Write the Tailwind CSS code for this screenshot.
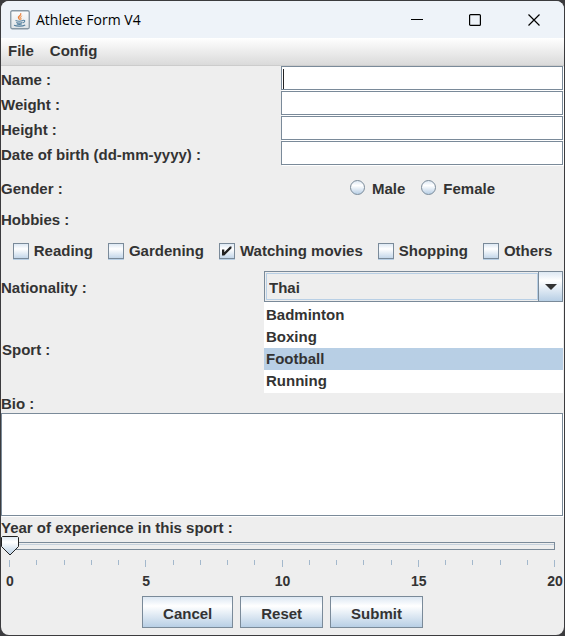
<!DOCTYPE html>
<html lang="en">
<head>
<meta charset="utf-8">
<title>Athlete Form V4</title>
<script src="https://cdn.jsdelivr.net/npm/@tailwindcss/browser@4"></script>
</head>
<body class="flex min-h-screen flex-col bg-[#3b3b3e] p-px font-['Liberation_Sans',Arial,sans-serif] text-[15px] leading-[18px] font-bold text-[#333333]">
<div class="flex flex-1 flex-col overflow-hidden rounded-lg bg-[#eeeeee]">
  <header class="flex h-[37px] items-center bg-[#eef3f9] pl-[9px] text-black">
    <svg class="mr-1.5 size-5" viewBox="0 0 20 20" fill="none" aria-hidden="true">
      <defs><linearGradient id="tile" x1="0" y1="0" x2="0" y2="1"><stop stop-color="#fdfdfd"/><stop offset="1" stop-color="#dde2e6"/></linearGradient></defs>
      <rect x=".75" y=".75" width="18.500" height="18" rx="1.500" fill="url(#tile)" stroke="#8797a3" stroke-width="1.300"/>
      <path d="M10.800 3c.5 2-3.400 2.800-2.600 5 .3.900 1 1.300 1.200 2 .6-1.200-.6-1.700-.2-2.700C9.700 6 11.700 5 10.800 3z" fill="#e8762c" stroke="#e8762c" stroke-width=".5"/>
      <path d="M12.200 5.700c-1.800.7-2.500 1.500-1.800 2.600.4.700.3 1.200-.2 1.800 1.300-.7 1.500-1.300.8-2.200-.5-.8.200-1.300 1.200-2.200z" fill="#f0924c" stroke="#f0924c" stroke-width=".4"/>
      <path d="M5.500 10.600c2 .7 5.500.7 7.500 0M6.300 12.500c1.900.7 4.200.7 6 0M6.800 14c1.500.5 3.500.5 5 0M13 10.300c2.500-.3 2.200 2-.3 2.800M4 15.300c2.800 1.200 8.500 1.200 11.200-.3" stroke="#54809f" stroke-width="1.100"/>
    </svg>
    <h1 class="flex-1 font-['Open_Sans',sans-serif] text-[14px] font-normal">Athlete Form V4</h1>
    <button type="button" aria-label="Minimize" class="flex h-full w-[58px] items-center justify-center"><svg width="12" height="12" viewBox="0 0 12 12" aria-hidden="true"><path d="M0 5.500h12" stroke="#000"/></svg></button>
    <button type="button" aria-label="Maximize" class="flex h-full w-[58px] items-center justify-center"><svg width="12" height="12" viewBox="0 0 12 12" fill="none" aria-hidden="true"><rect x=".6" y=".6" width="10.800" height="10.800" rx="1" stroke="#000" stroke-width="1.200"/></svg></button>
    <button type="button" aria-label="Close" class="flex h-full w-[60px] items-center justify-center"><svg width="12" height="12" viewBox="0 0 12 12" aria-hidden="true"><path d="M.5.5l11 11M11.500.5l-11 11" stroke="#000" stroke-width="1.200"/></svg></button>
  </header>

  <nav class="flex h-7 items-center gap-4 border-b border-[#cccccc] bg-linear-to-b from-white to-[#dadada] px-[7px] pb-0.5">
    <button type="button">File</button>
    <button type="button">Config</button>
  </nav>

  <form class="flex flex-col">
    <div class="grid grid-cols-[280fr_283fr] items-center gap-y-px">
      <label for="name" class="pt-1">Name :</label>
      <div class="relative mr-px h-6">
        <input id="name" type="text" class="peer block h-full w-full border border-[#7a8a99] bg-white px-px shadow-[1px_1px_0_#ffffff] outline-none">
        <span class="pointer-events-none absolute bottom-px left-0.5 top-[3px] w-px bg-[#222222] peer-focus:hidden"></span>
      </div>
      <label for="weight" class="pt-1">Weight :</label>
      <input id="weight" type="text" class="mr-px h-6 min-w-0 border border-[#7a8a99] bg-white px-px shadow-[1px_1px_0_#ffffff] outline-none">
      <label for="height" class="pt-1">Height :</label>
      <input id="height" type="text" class="mr-px h-6 min-w-0 border border-[#7a8a99] bg-white px-px shadow-[1px_1px_0_#ffffff] outline-none">
      <label for="birth" class="pt-1">Date of birth (dd-mm-yyyy) :</label>
      <input id="birth" type="text" class="mr-px h-6 min-w-0 border border-[#7a8a99] bg-white px-px shadow-[1px_1px_0_#ffffff] outline-none">
    </div>

    <div role="radiogroup" aria-labelledby="gender" class="grid h-[46px] grid-cols-[280fr_283fr] items-center pt-0.5">
      <span id="gender">Gender :</span>
      <div class="flex justify-center gap-4">
        <label class="flex items-center gap-[7px]"><input type="radio" name="gender" class="-mt-1 size-[15px] appearance-none rounded-full border border-[#7a8a99] bg-linear-to-b from-[#dde8f3] via-white via-35% to-[#b8cfe5]">Male</label>
        <label class="flex items-center gap-[7px]"><input type="radio" name="gender" class="-mt-1 size-[15px] appearance-none rounded-full border border-[#7a8a99] bg-linear-to-b from-[#dde8f3] via-white via-35% to-[#b8cfe5]">Female</label>
      </div>
    </div>

    <fieldset>
      <legend class="flex h-5 items-center pb-0.5">Hobbies :</legend>
      <div class="flex h-10 items-center justify-center gap-[15px]">
        <label class="flex items-center gap-[5px]"><input type="checkbox" class="size-4 appearance-none border border-[#7a8a99] bg-linear-to-b from-[#dde8f3] via-white via-35% to-[#c4d7ea] shadow-[0_1px_0_#b8cfe5]">Reading</label>
        <label class="flex items-center gap-[5px]"><input type="checkbox" class="size-4 appearance-none border border-[#7a8a99] bg-linear-to-b from-[#dde8f3] via-white via-35% to-[#c4d7ea] shadow-[0_1px_0_#b8cfe5]">Gardening</label>
        <label class="relative flex items-center gap-[5px]"><input type="checkbox" checked class="peer size-4 appearance-none border border-[#7a8a99] bg-linear-to-b from-[#dde8f3] via-white via-35% to-[#c4d7ea] shadow-[0_1px_0_#b8cfe5]"><svg class="pointer-events-none absolute left-0 hidden size-4 peer-checked:block" viewBox="0 0 16 16" aria-hidden="true"><path d="M3 6.500h2.300v2.700L11 3.500h1.500v1.800L5.300 12.500H3z" fill="#222"/></svg>Watching movies</label>
        <label class="flex items-center gap-[5px]"><input type="checkbox" class="size-4 appearance-none border border-[#7a8a99] bg-linear-to-b from-[#dde8f3] via-white via-35% to-[#c4d7ea] shadow-[0_1px_0_#b8cfe5]">Shopping</label>
        <label class="flex items-center gap-[5px]"><input type="checkbox" class="size-4 appearance-none border border-[#7a8a99] bg-linear-to-b from-[#dde8f3] via-white via-35% to-[#c4d7ea] shadow-[0_1px_0_#b8cfe5]">Others</label>
      </div>
    </fieldset>

    <div class="flex items-center pr-px">
      <label for="nationality" class="w-[263px] pt-0.5">Nationality :</label>
      <div class="relative flex-1">
        <select id="nationality" class="block h-[31px] w-full appearance-none border border-[#7a8a99] bg-[#eeeeee] pl-1 pt-0.5 outline-none"><option>Thai</option></select>
        <span class="pointer-events-none absolute inset-y-0.5 left-0.5 right-[25px] border border-[#b8cfe5]"></span>
        <span class="pointer-events-none absolute inset-y-px right-px flex w-6 items-center justify-center border-l border-[#7a8a99] bg-linear-to-b from-[#dde8f3] via-white via-30% to-[#b8cfe5]"><svg width="12" height="6" viewBox="0 0 12 6" aria-hidden="true"><path d="M0 0h12L6 6z" fill="#333"/></svg></span>
      </div>
    </div>

    <div class="flex items-center pr-px">
      <label for="sport" class="w-[263px] pl-px pt-1">Sport :</label>
      <select id="sport" size="4" class="block h-[91px] flex-1 appearance-none overflow-hidden bg-white pt-0.5 pb-px outline-none">
        <option class="h-[22px] min-h-0 px-0.5 py-0.5 font-bold text-[#333333]">Badminton</option>
        <option class="h-[22px] min-h-0 px-0.5 py-0.5 font-bold text-[#333333]">Boxing</option>
        <option selected class="h-[22px] min-h-0 bg-linear-to-b from-[#b8cfe5] to-[#b8cfe5] px-0.5 py-0.5 font-bold text-[#333333]">Football</option>
        <option class="h-[22px] min-h-0 px-0.5 py-0.5 font-bold text-[#333333]">Running</option>
      </select>
    </div>

    <label for="bio" class="pt-0.5">Bio :</label>
    <textarea id="bio" class="mr-px block h-[103px] resize-none border border-[#7a8a99] bg-white p-px shadow-[1px_1px_0_#ffffff] outline-none"></textarea>

    <label for="years" class="flex h-5 items-center pt-1">Year of experience in this sport :</label>
    <div class="relative h-6 px-[9px] pt-1.5">
      <input id="years" type="range" min="0" max="20" value="0" class="block h-2 w-full appearance-none border border-[#7a8a99] bg-linear-to-b from-[#eeeeee] from-17% via-[#a3b8cc] via-17% to-[#eeeeee] to-34% outline-none [&::-webkit-slider-thumb]:opacity-0">
      <svg class="pointer-events-none absolute left-0 top-0 h-5 w-[18px]" viewBox="0 0 18 20" aria-hidden="true"><defs><linearGradient id="knob" x1="0" y1="0" x2="0" y2="1"><stop stop-color="#dde8f3"/><stop offset=".3" stop-color="#fff"/><stop offset="1" stop-color="#b8cfe5"/></linearGradient></defs><path d="M1.500.5h15l1 1v9l-8.500 8.500L.5 10.500v-9z" fill="url(#knob)" stroke="#222"/></svg>
    </div>
    <div class="flex h-3 justify-between pl-2 pr-[9px]" aria-hidden="true">
      <i class="h-[7px] w-px bg-[#a3b8cc]"></i><i class="h-[5px] w-px bg-[#a3b8cc]"></i><i class="h-[5px] w-px bg-[#a3b8cc]"></i><i class="h-[5px] w-px bg-[#a3b8cc]"></i><i class="h-[5px] w-px bg-[#a3b8cc]"></i>
      <i class="h-[7px] w-px bg-[#a3b8cc]"></i><i class="h-[5px] w-px bg-[#a3b8cc]"></i><i class="h-[5px] w-px bg-[#a3b8cc]"></i><i class="h-[5px] w-px bg-[#a3b8cc]"></i><i class="h-[5px] w-px bg-[#a3b8cc]"></i>
      <i class="h-[7px] w-px bg-[#a3b8cc]"></i><i class="h-[5px] w-px bg-[#a3b8cc]"></i><i class="h-[5px] w-px bg-[#a3b8cc]"></i><i class="h-[5px] w-px bg-[#a3b8cc]"></i><i class="h-[5px] w-px bg-[#a3b8cc]"></i>
      <i class="h-[7px] w-px bg-[#a3b8cc]"></i><i class="h-[5px] w-px bg-[#a3b8cc]"></i><i class="h-[5px] w-px bg-[#a3b8cc]"></i><i class="h-[5px] w-px bg-[#a3b8cc]"></i><i class="h-[5px] w-px bg-[#a3b8cc]"></i>
      <i class="h-[7px] w-px bg-[#a3b8cc]"></i>
    </div>
    <div class="flex h-6 justify-between px-[9px] text-[14px]">
      <span class="flex w-0 justify-center">0</span><span class="flex w-0 justify-center">5</span><span class="flex w-0 justify-center">10</span><span class="flex w-0 justify-center">15</span><span class="flex w-0 justify-center">20</span>
    </div>

    <div class="flex justify-center gap-[7px]">
      <button type="button" class="h-8 border border-[#7a8a99] bg-linear-to-b from-[#dde8f3] via-white via-30% to-[#b8cfe5] px-5 pt-1">Cancel</button>
      <button type="reset" class="h-8 border border-[#7a8a99] bg-linear-to-b from-[#dde8f3] via-white via-30% to-[#b8cfe5] px-5 pt-1">Reset</button>
      <button type="submit" class="h-8 border border-[#7a8a99] bg-linear-to-b from-[#dde8f3] via-white via-30% to-[#b8cfe5] px-5 pt-1">Submit</button>
    </div>
  </form>
</div>
</body>
</html>
